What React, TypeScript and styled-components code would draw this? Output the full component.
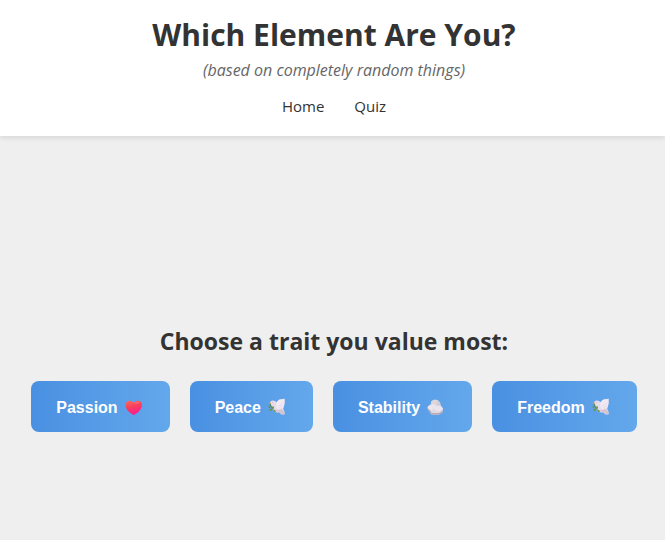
import React from "react";
import styled, { createGlobalStyle } from "styled-components";

const GlobalStyle = createGlobalStyle`
  * { box-sizing: border-box; }
  body {
    margin: 0;
    background: #efefef;
    color: #333;
    font-family: "Open Sans", "Noto Sans", sans-serif;
  }
`;

const Page = styled.div`
  display: flex;
  flex-direction: column;
  min-height: 100vh;
`;

const Header = styled.header`
  display: flex;
  flex-direction: column;
  align-items: center;
  padding: 13px 20px 17px 23px;
  background: #fff;
  box-shadow: 0 2px 5px rgba(0, 0, 0, 0.1);
`;

const Title = styled.h1`
  margin: 0;
  font-size: 30px;
  line-height: 44px;
`;

const Tagline = styled.p`
  margin: 2px 0 12px;
  font-size: 16px;
  font-style: italic;
  line-height: 22px;
  color: #666;
`;

const Nav = styled.nav`
  display: flex;
  gap: 30px;
`;

const NavLink = styled.a`
  font-size: 15px;
  line-height: 26px;
  color: #333;
  text-decoration: none;
`;

const Main = styled.main`
  display: flex;
  flex: 1;
  flex-direction: column;
  align-items: center;
  justify-content: flex-end;
  padding: 20px 20px 108px 23px;
`;

const Question = styled.h2`
  margin: 0 0 24px;
  font-size: 23px;
  line-height: 32px;
`;

const Options = styled.div`
  display: flex;
  flex-wrap: wrap;
  justify-content: center;
  gap: 20px;
`;

const OptionButton = styled.button`
  display: flex;
  align-items: center;
  gap: 5px;
  padding: 17px 25px 14px;
  border: none;
  border-radius: 8px;
  background: linear-gradient(to right, #4a90e2, #63a8eb);
  color: #fff;
  font: bold 16px/20px "Liberation Sans", Arial, sans-serif;
  white-space: nowrap;
  cursor: pointer;
`;

const Glyph = styled.svg`
  display: block;
  width: 22px;
  height: 20px;
`;

const Heart = () => (
  <Glyph viewBox="0 0 22 20" aria-hidden="true">
    <defs>
      <linearGradient id="heart" x1="0" y1="0" x2="0.3" y2="1">
        <stop offset="0" stopColor="#ff6b5f" />
        <stop offset="0.5" stopColor="#f83e5c" />
        <stop offset="1" stopColor="#fa1f8c" />
      </linearGradient>
    </defs>
    <path d="M10.700 17C9.900 17 2.500 12.600 2.500 7.200C2.500 4.500 4.300 2.800 6.500 2.800C8.500 2.800 10 3.900 10.700 5.200C11.500 3.900 13 2.800 15 2.800C17.200 2.800 18.900 4.500 18.900 7.200C18.900 12.600 11.500 17 10.700 17Z" fill="url(#heart)" />
    <path d="M12 6.200Q13.500 4 16 4.800" fill="none" stroke="#ff8175" strokeWidth="1" opacity="0.7" />
  </Glyph>
);

const Dove = () => (
  <Glyph viewBox="0 0 22 20" aria-hidden="true">
    <path d="M4 4.500Q4.500 2.500 7 2.600Q9.200 2.600 10.500 4.200L13 1.800L18.500 0.800Q19.300 6 17.200 11L18.500 13.500L18.600 16.300L15.500 16.500L13 14.300Q8.500 15 6.500 11.500Q5.800 8.500 4.800 6Z" fill="#e6dce9" />
    <path d="M10.500 4.200L13 1.800L18.500 0.800Q19.200 5.500 17.200 9.500L12 11.500Q9.500 8.500 10.500 4.200Z" fill="#f1eaf3" />
    <path d="M12 8.500L17.600 4.500M13 10L17 7.500M12.500 13L18 15" stroke="#dccfe0" strokeWidth="0.600" fill="none" />
    <path d="M7 11.200Q10 14.200 13 13.500L16 16.500L18.500 16.300L18.300 13.800L15.500 11Q11 13 7 11.200Z" fill="#d5c4d0" />
    <path d="M4.500 4.300L2.500 5.400L4.600 6Z" fill="#f3b740" />
    <path d="M4 5.500Q4.500 10 8.500 13" stroke="#568044" strokeWidth="1" fill="none" />
    <path d="M4 8Q1.800 7 2.700 10Q4.800 10.500 4 8ZM5.500 9Q8.500 7 8 10.500Q6 11.500 5.500 9ZM6 11Q2.500 10.300 3.800 13Q6.500 13.500 6 11ZM8 12Q9.500 11.500 10 13.700Q7.500 14.500 8 12Z" fill="#69964f" />
    <circle cx="6.500" cy="4.700" r="0.400" fill="#a497a8" />
  </Glyph>
);

const Rock = () => (
  <Glyph viewBox="0 0 22 20" aria-hidden="true">
    <path d="M6.500 3.300L9 1.700L12.500 2L15 4.500L15.500 7.500L18 10.500L17.400 14.500L13.500 16.800L6.500 16.500L4.500 14L2.500 10L3.300 8L5.700 6.500Z" fill="#dfd9e1" />
    <path d="M6.500 3.300L9 1.700L12.500 2L11.500 6.500L8.500 7.500L5.700 6.500Z" fill="#ddd8db" />
    <path d="M12.500 2L15 4.500L15.500 7.500L13 9L11.500 6.500Z" fill="#d3cdd4" />
    <path d="M3.300 8L8.500 6L11.500 8L8 11L6 13.500L2.500 10Z" fill="#eae6eb" />
    <path d="M2.500 10L6.200 13.300L6.500 16.500L4.500 14Z" fill="#b6a9b5" />
    <path d="M11.500 8L15.500 7.500L18 10.500L14 13.500L8 11Z" fill="#e9e4f0" />
    <path d="M6.300 15L14 15L17.700 12.500L17.400 14.500L13.500 16.800L6.500 16.500Z" fill="#baaab7" />
  </Glyph>
);

const options = [
  { label: "Passion", Icon: Heart },
  { label: "Peace", Icon: Dove },
  { label: "Stability", Icon: Rock },
  { label: "Freedom", Icon: Dove },
];

export default function App() {
  return (
    <Page>
      <GlobalStyle />
      <Header>
        <Title>Which Element Are You?</Title>
        <Tagline>(based on completely random things)</Tagline>
        <Nav>
          <NavLink href="#home">Home</NavLink>
          <NavLink href="#quiz">Quiz</NavLink>
        </Nav>
      </Header>
      <Main>
        <Question>Choose a trait you value most:</Question>
        <Options>
          {options.map(({ label, Icon }) => (
            <OptionButton key={label} type="button">
              {label}
              <Icon />
            </OptionButton>
          ))}
        </Options>
      </Main>
    </Page>
  );
}
